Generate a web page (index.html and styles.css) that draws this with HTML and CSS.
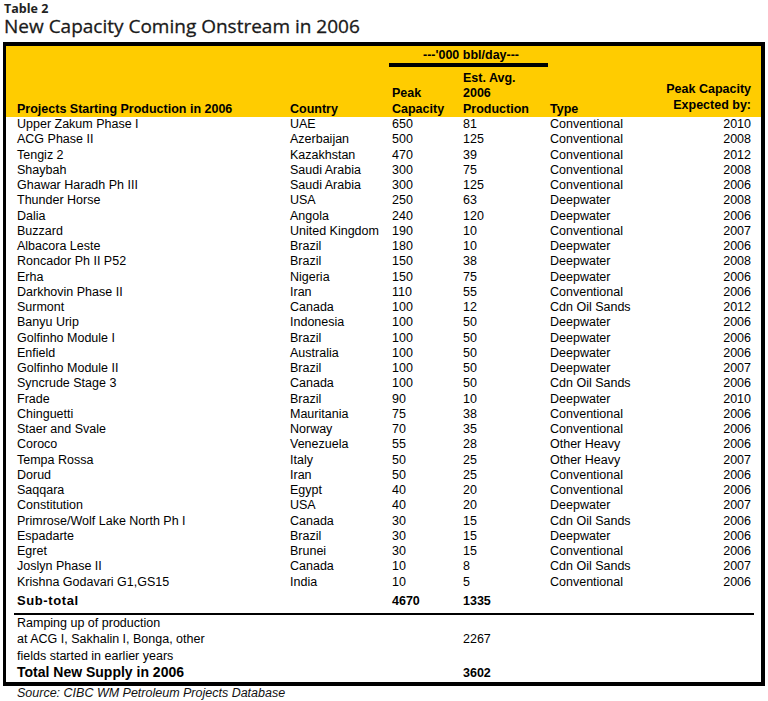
FILE: index.html
```html
<!DOCTYPE html>
<html lang="en">
<head>
<meta charset="utf-8">
<title>New Capacity Coming Onstream in 2006</title>
<link rel="stylesheet" href="styles.css">
</head>
<body>
<div class="page">
  <div class="label">Table 2</div>
  <h1 class="title">New Capacity Coming Onstream in 2006</h1>
  <div class="box">
    <table class="data">
      <colgroup>
        <col class="c1"><col class="c2"><col class="c3"><col class="c4"><col class="c5"><col class="c6">
      </colgroup>
      <thead>
        <tr class="unit-row">
          <th></th><th></th>
          <th colspan="2" class="unit"><div class="unit-text">---'000 bbl/day---</div><div class="unit-bar"></div></th>
          <th></th><th></th>
        </tr>
        <tr class="head-row">
          <th class="first">Projects Starting Production in 2006</th>
          <th>Country</th>
          <th>Peak<br>Capacity</th>
          <th>Est. Avg.<br>2006<br>Production</th>
          <th>Type</th>
          <th class="last">Peak Capacity<br>Expected by:</th>
        </tr>
      </thead>
      <tbody class="rows">
        <tr><td class="first">Upper Zakum Phase I</td><td>UAE</td><td>650</td><td>81</td><td>Conventional</td><td class="last">2010</td></tr>
        <tr><td class="first">ACG Phase II</td><td>Azerbaijan</td><td>500</td><td>125</td><td>Conventional</td><td class="last">2008</td></tr>
        <tr><td class="first">Tengiz 2</td><td>Kazakhstan</td><td>470</td><td>39</td><td>Conventional</td><td class="last">2012</td></tr>
        <tr><td class="first">Shaybah</td><td>Saudi Arabia</td><td>300</td><td>75</td><td>Conventional</td><td class="last">2008</td></tr>
        <tr><td class="first">Ghawar Haradh Ph III</td><td>Saudi Arabia</td><td>300</td><td>125</td><td>Conventional</td><td class="last">2006</td></tr>
        <tr><td class="first">Thunder Horse</td><td>USA</td><td>250</td><td>63</td><td>Deepwater</td><td class="last">2008</td></tr>
        <tr><td class="first">Dalia</td><td>Angola</td><td>240</td><td>120</td><td>Deepwater</td><td class="last">2006</td></tr>
        <tr><td class="first">Buzzard</td><td>United Kingdom</td><td>190</td><td>10</td><td>Conventional</td><td class="last">2007</td></tr>
        <tr><td class="first">Albacora Leste</td><td>Brazil</td><td>180</td><td>10</td><td>Deepwater</td><td class="last">2006</td></tr>
        <tr><td class="first">Roncador Ph II P52</td><td>Brazil</td><td>150</td><td>38</td><td>Deepwater</td><td class="last">2008</td></tr>
        <tr><td class="first">Erha</td><td>Nigeria</td><td>150</td><td>75</td><td>Deepwater</td><td class="last">2006</td></tr>
        <tr><td class="first">Darkhovin Phase II</td><td>Iran</td><td>110</td><td>55</td><td>Conventional</td><td class="last">2006</td></tr>
        <tr><td class="first">Surmont</td><td>Canada</td><td>100</td><td>12</td><td>Cdn Oil Sands</td><td class="last">2012</td></tr>
        <tr><td class="first">Banyu Urip</td><td>Indonesia</td><td>100</td><td>50</td><td>Deepwater</td><td class="last">2006</td></tr>
        <tr><td class="first">Golfinho Module I</td><td>Brazil</td><td>100</td><td>50</td><td>Deepwater</td><td class="last">2006</td></tr>
        <tr><td class="first">Enfield</td><td>Australia</td><td>100</td><td>50</td><td>Deepwater</td><td class="last">2006</td></tr>
        <tr><td class="first">Golfinho Module II</td><td>Brazil</td><td>100</td><td>50</td><td>Deepwater</td><td class="last">2007</td></tr>
        <tr><td class="first">Syncrude Stage 3</td><td>Canada</td><td>100</td><td>50</td><td>Cdn Oil Sands</td><td class="last">2006</td></tr>
        <tr><td class="first">Frade</td><td>Brazil</td><td>90</td><td>10</td><td>Deepwater</td><td class="last">2010</td></tr>
        <tr><td class="first">Chinguetti</td><td>Mauritania</td><td>75</td><td>38</td><td>Conventional</td><td class="last">2006</td></tr>
        <tr><td class="first">Staer and Svale</td><td>Norway</td><td>70</td><td>35</td><td>Conventional</td><td class="last">2006</td></tr>
        <tr><td class="first">Coroco</td><td>Venezuela</td><td>55</td><td>28</td><td>Other Heavy</td><td class="last">2006</td></tr>
        <tr><td class="first">Tempa Rossa</td><td>Italy</td><td>50</td><td>25</td><td>Other Heavy</td><td class="last">2007</td></tr>
        <tr><td class="first">Dorud</td><td>Iran</td><td>50</td><td>25</td><td>Conventional</td><td class="last">2006</td></tr>
        <tr><td class="first">Saqqara</td><td>Egypt</td><td>40</td><td>20</td><td>Conventional</td><td class="last">2006</td></tr>
        <tr><td class="first">Constitution</td><td>USA</td><td>40</td><td>20</td><td>Deepwater</td><td class="last">2007</td></tr>
        <tr><td class="first">Primrose/Wolf Lake North Ph I</td><td>Canada</td><td>30</td><td>15</td><td>Cdn Oil Sands</td><td class="last">2006</td></tr>
        <tr><td class="first">Espadarte</td><td>Brazil</td><td>30</td><td>15</td><td>Deepwater</td><td class="last">2006</td></tr>
        <tr><td class="first">Egret</td><td>Brunei</td><td>30</td><td>15</td><td>Conventional</td><td class="last">2006</td></tr>
        <tr><td class="first">Joslyn Phase II</td><td>Canada</td><td>10</td><td>8</td><td>Cdn Oil Sands</td><td class="last">2007</td></tr>
        <tr><td class="first">Krishna Godavari G1,GS15</td><td>India</td><td>10</td><td>5</td><td>Conventional</td><td class="last">2006</td></tr>
      </tbody>
      <tbody class="totals">
        <tr class="subtotal"><td class="first"><span class="sub-label">Sub-total</span></td><td></td><td>4670</td><td>1335</td><td></td><td></td></tr>
        <tr class="divider"><td colspan="6"><div class="rule"></div></td></tr>
        <tr class="note"><td class="first">Ramping up of production</td><td></td><td></td><td></td><td></td><td></td></tr>
        <tr class="note"><td class="first">at ACG I, Sakhalin I, Bonga, other</td><td></td><td></td><td>2267</td><td></td><td></td></tr>
        <tr class="note"><td class="first">fields started in earlier years</td><td></td><td></td><td></td><td></td><td></td></tr>
        <tr class="total"><td class="first"><span class="total-label">Total New Supply in 2006</span></td><td></td><td></td><td>3602</td><td></td><td></td></tr>
      </tbody>
    </table>
  </div>
  <p class="source">Source: CIBC WM Petroleum Projects Database</p>
</div>
</body>
</html>
```
FILE: styles.css
```css
* { box-sizing: border-box; }

body {
  margin: 0;
  background: #ffffff;
  color: #000000;
  font-family: "Liberation Sans", Arial, sans-serif;
}

.page {
  width: 768px;
  padding: 0 3px;
}

.label {
  font-family: "Open Sans", "Liberation Sans", sans-serif;
  font-weight: 700;
  font-size: 12.5px;
  line-height: 17px;
  color: #222222;
  padding-left: 1px;
}

.title {
  margin: 0;
  font-family: "Open Sans", "Liberation Sans", sans-serif;
  font-weight: 400;
  font-size: 19px;
  line-height: 19px;
  color: #1a1a1a;
  -webkit-text-stroke: 0.3px #1a1a1a;
  padding-left: 1px;
}

.box {
  margin-top: 6px;
  width: 762px;
  border-style: solid;
  border-color: #000000;
  border-width: 4px 4px 4px 3px;
  background: #ffffff;
}

.data {
  width: 755px;
  table-layout: fixed;
  border-collapse: collapse;
  border-spacing: 0;
  font-size: 12.5px;
}

.c1 { width: 284px; }
.c2 { width: 102px; }
.c3 { width: 71px; }
.c4 { width: 87px; }
.c5 { width: 100px; }
.c6 { width: 111px; }

.data th,
.data td {
  padding: 0;
  text-align: left;
  white-space: nowrap;
}

.data th {
  font-weight: 700;
}

.data .first { padding-left: 11px; }
.data .last { text-align: right; padding-right: 10px; }

thead { background: #ffcc00; }

.unit-row th {
  line-height: 15px;
  vertical-align: top;
}

.unit-text {
  text-align: center;
  padding-top: 2px;
}

.unit-bar {
  height: 4px;
  margin: 0 2px 0 -3px;
  background: #000000;
}

.head-row th {
  height: 50px;
  vertical-align: bottom;
  line-height: 15.5px;
  padding-bottom: 0;
}

.head-row th.last { padding-bottom: 4px; }

.rows td {
  line-height: 15.25px;
}

.subtotal td {
  font-weight: 700;
  line-height: 16px;
  padding-top: 3px;
}

.sub-label {
  font-size: 13px;
  letter-spacing: 0.6px;
}

.divider td { padding-top: 4px; }

.rule {
  height: 2px;
  margin: 0 7px 0 8px;
  background: #000000;
}

.note td {
  line-height: 16.5px;
}

.total td {
  font-weight: 700;
  line-height: 16.5px;
}

.total-label {
  font-size: 14px;
}

.source {
  margin: 0;
  padding-left: 14px;
  font-size: 12.5px;
  line-height: 14px;
  font-style: italic;
  color: #111111;
}
```
